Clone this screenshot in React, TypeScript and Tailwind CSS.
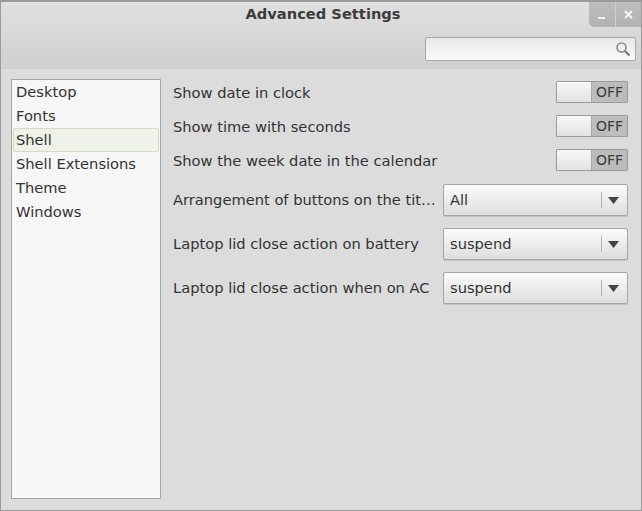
import React from "react";

const font = { fontFamily: '"DejaVu Sans", sans-serif' };

function Toggle() {
  return (
    <div className="flex w-[72px] h-[22px] border border-[#9a9a9a] rounded-[1px] overflow-hidden">
      <div className="w-[35px] bg-gradient-to-b from-[#f8f8f8] to-[#e2e2e2] border-r border-[#a8a8a8]" />
      <div className="flex-1 bg-[#bcbcbc] text-[#3a3a3a] text-[14px] leading-[20px] text-center">OFF</div>
    </div>
  );
}

function Combo({ value }: { value: string }) {
  return (
    <div className="flex items-center w-[185px] h-[32px] rounded-[2px] border border-[#a5a5a5] bg-gradient-to-b from-[#fbfbfb] to-[#dedede] shadow-[0_1px_0_#c4c4c4]">
      <div className="flex-1 pl-[6px] text-[14.67px] text-[#333]">{value}</div>
      <div className="w-px h-[16px] bg-[#b4b4b4]" />
      <div className="w-[25px] flex justify-center pr-[3px]">
        <svg width="11" height="7" viewBox="0 0 11 7"><path d="M0 0h11L5.5 7z" fill="#444" /></svg>
      </div>
    </div>
  );
}

function ToggleRow({ label }: { label: string }) {
  return (
    <div className="flex items-center justify-between h-[24px]">
      <span className="text-[14.67px] text-[#333] pt-[1px]">{label}</span>
      <Toggle />
    </div>
  );
}

function ComboRow({ label, value }: { label: string; value: string }) {
  return (
    <div className="flex items-center justify-between h-[32px]">
      <span className="text-[14.67px] text-[#333] whitespace-nowrap">{label}</span>
      <Combo value={value} />
    </div>
  );
}

export default function App() {
  const items = ["Desktop", "Fonts", "Shell", "Shell Extensions", "Theme", "Windows"];
  return (
    <div style={font} className="w-[642px] h-[511px] flex flex-col bg-[#dcdcdc] border border-t-2 border-[#9b9b9b] overflow-hidden">
      <div className="h-[67px] shrink-0 bg-gradient-to-b from-[#e0e0e0] to-[#d0d0d0] border-b border-[#cfcfcf] flex flex-col">
        <div className="flex h-[26px] items-start">
          <div className="flex-1 pl-[56px] text-center text-[14.67px] font-bold text-[#3c3c3c] leading-[24px]">Advanced Settings</div>
          <div className="flex w-[52px] h-[25px] rounded-bl-[5px] bg-gradient-to-b from-[#bdbdbd] to-[#b2b2b2]">
            <div className="flex-1 flex items-center justify-center border-r border-[#cfcfcf]">
              <div className="w-[7px] h-[2px] bg-[#f2f2f2] mt-[6px]" />
            </div>
            <div className="flex-1 flex items-center justify-center">
              <svg width="9" height="9" viewBox="0 0 9 9"><path d="M1 1l7 7M8 1L1 8" stroke="#f4f4f4" strokeWidth="2.2" /></svg>
            </div>
          </div>
        </div>
        <div className="flex justify-end pr-[5px] pt-[9px]">
          <div className="flex items-center justify-end w-[211px] h-[24px] border border-[#a8a8a8] rounded-[2px] bg-gradient-to-b from-[#e8e8e8] to-[#fafafa] pr-[4px]">
            <svg width="16" height="16" viewBox="0 0 16 16" fill="none">
              <circle cx="6.5" cy="6.5" r="4.5" stroke="#8a8a8a" strokeWidth="1.6" />
              <path d="M10 10l4.5 4.5" stroke="#7a7a7a" strokeWidth="2.2" />
            </svg>
          </div>
        </div>
      </div>
      <div className="flex-1 flex pl-[10px] pr-[13px] pt-[10px] pb-[11px] gap-[12px] min-h-0">
        <div className="w-[150px] shrink-0 border border-[#a6a6a6] bg-[#f7f7f7] px-px">
          {items.map((t) => (
            <div
              key={t}
              className={
                "h-[24px] pl-[2px] flex items-center text-[14.67px] text-[#333] border " +
                (t === "Shell" ? "bg-[#eff2e8] border-[#d4dcc6] rounded-[2px]" : "border-transparent")
              }
            >
              {t}
            </div>
          ))}
        </div>
        <div className="flex-1 flex flex-col pt-[1px]">
          <div className="flex flex-col gap-[10px]">
            <ToggleRow label="Show date in clock" />
            <ToggleRow label="Show time with seconds" />
            <ToggleRow label="Show the week date in the calendar" />
          </div>
          <div className="flex flex-col gap-[12px] mt-[12px]">
            <ComboRow label="Arrangement of buttons on the tit…" value="All" />
            <ComboRow label="Laptop lid close action on battery" value="suspend" />
            <ComboRow label="Laptop lid close action when on AC" value="suspend" />
          </div>
        </div>
      </div>
    </div>
  );
}
